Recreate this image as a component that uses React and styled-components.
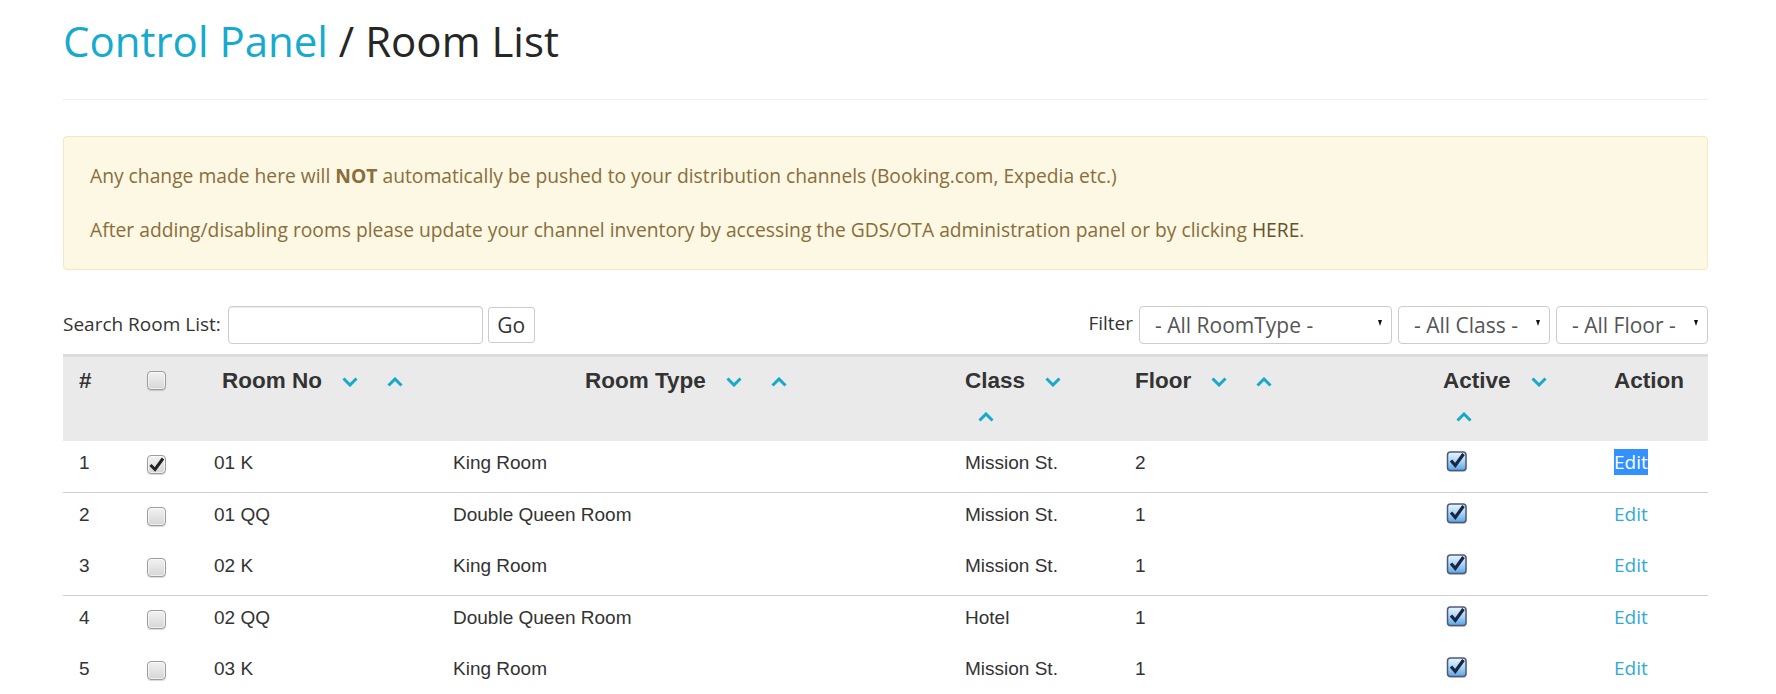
import React from 'react';
import styled, { createGlobalStyle } from 'styled-components';

const GlobalStyle = createGlobalStyle`
  html, body { margin: 0; padding: 0; background: #fff; }
  body { font-family: "Open Sans", "Liberation Sans", Arial, sans-serif; color: #333; }
  *, *::before, *::after { box-sizing: border-box; }
`;

const Page = styled.div`
  height: 694px;
  overflow: hidden;
  padding: 0 68px 0 63px;
`;

const TitleBar = styled.header`
  padding: 18px 0 35px;
  border-bottom: 1px solid #eee;
`;

const Title = styled.h1`
  margin: 0;
  font-family: "Open Sans", sans-serif;
  font-weight: 400;
  font-size: 42px;
  line-height: 46px;
  color: #262626;
`;

const Crumb = styled.span`
  color: #16aacf;
`;

const Alert = styled.div`
  margin-top: 36px;
  padding: 26px 26px 26px;
  background: #fcf8e3;
  border: 1px solid #f7e6c1;
  border-radius: 4px;
  color: #8a6d3b;
  font-family: "Open Sans", sans-serif;
  font-size: 19.25px;
  line-height: 26px;
  display: flex;
  flex-direction: column;
  gap: 28px;
`;

const AlertLine = styled.p`
  margin: 0;
`;

const Strong = styled.b`
  font-weight: 700;
`;

const AlertLink = styled.a`
  color: #66512c;
  text-decoration: none;
`;

const Toolbar = styled.div`
  margin-top: 36px;
  height: 38px;
  display: flex;
  align-items: center;
  justify-content: space-between;
`;

const Group = styled.div`
  display: flex;
  align-items: center;
  gap: ${p => p.$gap}px;
`;

const Label = styled.label`
  font-family: "Open Sans", sans-serif;
  font-size: 19px;
  color: #333;
  padding-bottom: ${p => p.$lift}px;
  margin-right: ${p => p.$mr}px;
`;

const SearchInput = styled.input`
  width: 255px;
  height: 38px;
  border: 1px solid #ccc;
  border-radius: 4px;
  box-shadow: inset 0 1px 1px rgba(0, 0, 0, 0.075);
  font-family: "Open Sans", sans-serif;
  font-size: 21px;
  padding: 0 12px;
  outline: none;
`;

const GoButton = styled.button`
  width: 47px;
  height: 36px;
  margin-left: 5px;
  border: 1px solid #ccc;
  border-radius: 3px;
  background: #fff;
  color: #333;
  font-family: "Open Sans", sans-serif;
  font-size: 21px;
  padding: 0;
`;

const SelectBox = styled.div`
  position: relative;
  width: ${p => p.$w}px;
  height: 38px;
  border: 1px solid #ccc;
  border-radius: 4px;
  background: #fff;
  display: flex;
  align-items: center;
  padding-left: 15px;
  font-family: "Open Sans", sans-serif;
  font-size: 21px;
  color: #555;
  white-space: nowrap;
`;

const Arrow = styled.span`
  position: absolute;
  right: 9px;
  top: 13px;
  width: 0;
  height: 0;
  border-left: 2.5px solid transparent;
  border-right: 2.5px solid transparent;
  border-top: 6px solid #111;
`;

const Table = styled.div`
  margin-top: 10px;
  font-family: "Liberation Sans", Arial, sans-serif;
  color: #333;
`;

const HeadRow = styled.div`
  display: grid;
  grid-template-columns: 77px 74px 363px 380px 170px 308px 171px 102px;
  background: #eaeaea;
  border-top: 3px solid #dcdcdc;
`;

const HeadCell = styled.div`
  padding: ${p => (p.$box ? '14px' : '6px')} 8px 6px ${p => p.$indent ?? 8}px;
  font-weight: 700;
  font-size: 22.5px;
  line-height: 36px;
  white-space: nowrap;
`;

const SortIcon = styled.span`
  display: ${p => (p.$block ? 'flex' : 'inline-flex')};
  height: ${p => (p.$block ? '36px' : 'auto')};
  align-items: center;
  vertical-align: middle;
  margin-left: ${p => p.$ml}px;
  line-height: 0;
`;

const BodyRow = styled.div`
  display: grid;
  grid-template-columns: 77px 66px 239px 512px 170px 311px 168px 102px;
  height: ${p => (p.$divider ? 52 : 51)}px;
  border-top: ${p => (p.$divider ? '1px solid #cfcfcf' : 'none')};
`;

const Cell = styled.div`
  padding: 8px 8px 0 ${p => p.$indent ?? 8}px;
  font-size: 19px;
  line-height: 27px;
  white-space: nowrap;
`;

const BoxCell = styled.div`
  padding: ${p => p.$top}px 0 0 ${p => p.$indent}px;
`;

const EditLink = styled.a`
  font-family: "Open Sans", sans-serif;
  font-size: 19px;
  text-decoration: none;
  color: ${p => (p.$selected ? '#fff' : '#2eabd4')};
  background: ${p => (p.$selected ? '#3390ff' : 'transparent')};
`;

const GrayBox = styled.span`
  display: block;
  width: 19px;
  height: 19px;
  border: 1px solid #9c9c9c;
  border-radius: 4px;
  background: linear-gradient(#f2f2f2, #d6d6d6);
  box-shadow: 0 1px 1px rgba(0, 0, 0, 0.15), inset 0 0 0 1px rgba(255, 255, 255, 0.6);
  line-height: 0;
`;

const Chevron = ({ up }) => (
  <svg width="16" height="10" viewBox="0 0 16 10">
    <path
      d={up ? 'M1.5 8.5 L8 2 L14.5 8.5' : 'M1.5 1.5 L8 8 L14.5 1.5'}
      fill="none"
      stroke="#17a8cd"
      strokeWidth="3"
    />
  </svg>
);

const Checkbox = ({ checked }) => (
  <GrayBox>
    {checked && (
      <svg width="17" height="17" viewBox="0 0 17 17">
        <path d="M2.5 9 L7 13.5 L15 2.5" fill="none" stroke="#222" strokeWidth="3" />
      </svg>
    )}
  </GrayBox>
);

const ActiveBox = ({ id }) => (
  <svg width="22" height="22" viewBox="0 0 22 22" style={{ display: 'block' }}>
    <defs>
      <linearGradient id={id} x1="0" y1="0" x2="0" y2="1">
        <stop offset="0" stopColor="#eaf6ff" />
        <stop offset="0.5" stopColor="#a9d6f8" />
        <stop offset="1" stopColor="#5aa4e4" />
      </linearGradient>
    </defs>
    <rect x="1.5" y="2" width="19" height="19" rx="3" fill="#000" opacity="0.18" />
    <rect x="1.5" y="1" width="18.5" height="18.5" rx="3" fill={`url(#${id})`} stroke="#4d5a78" strokeWidth="1.5" />
    <path d="M5 9.5 L9.3 14.5 L17.5 3" fill="none" stroke="#1b2440" strokeWidth="3.2" />
  </svg>
);

const SortPair = ({ wrap }) => (
  <>
    <SortIcon $ml={20}><Chevron /></SortIcon>
    <SortIcon $ml={wrap ? 13 : 29} $block={wrap}><Chevron up /></SortIcon>
  </>
);

const rows = [
  { n: 1, checked: true, no: '01 K', type: 'King Room', cls: 'Mission St.', floor: '2', selected: true },
  { n: 2, no: '01 QQ', type: 'Double Queen Room', cls: 'Mission St.', floor: '1', divider: true },
  { n: 3, no: '02 K', type: 'King Room', cls: 'Mission St.', floor: '1' },
  { n: 4, no: '02 QQ', type: 'Double Queen Room', cls: 'Hotel', floor: '1', divider: true },
  { n: 5, no: '03 K', type: 'King Room', cls: 'Mission St.', floor: '1' },
];

export default function App() {
  return (
    <Page>
      <GlobalStyle />
      <TitleBar>
        <Title>
          <Crumb>Control Panel</Crumb> / Room List
        </Title>
      </TitleBar>

      <Alert>
        <AlertLine>
          Any change made here will <Strong>NOT</Strong> automatically be pushed to your distribution channels (Booking.com, Expedia etc.)
        </AlertLine>
        <AlertLine>
          After adding/disabling rooms please update your channel inventory by accessing the GDS/OTA administration panel or by clicking <AlertLink href="#">HERE</AlertLink>.
        </AlertLine>
      </Alert>

      <Toolbar>
        <Group $gap={0}>
          <Label $mr={7} $lift={3}>Search Room List:</Label>
          <SearchInput type="text" />
          <GoButton>Go</GoButton>
        </Group>
        <Group $gap={6}>
          <Label $mr={0} $lift={5}>Filter</Label>
          <SelectBox $w={253}>- All RoomType -<Arrow /></SelectBox>
          <SelectBox $w={152}>- All Class -<Arrow /></SelectBox>
          <SelectBox $w={152}>- All Floor -<Arrow /></SelectBox>
        </Group>
      </Toolbar>

      <Table>
        <HeadRow>
          <HeadCell $indent={16}>#</HeadCell>
          <HeadCell $box $indent={7}><Checkbox /></HeadCell>
          <HeadCell>Room No<SortPair /></HeadCell>
          <HeadCell>Room Type<SortPair /></HeadCell>
          <HeadCell>Class<SortPair wrap /></HeadCell>
          <HeadCell>Floor<SortPair /></HeadCell>
          <HeadCell>Active<SortPair wrap /></HeadCell>
          <HeadCell>Action</HeadCell>
        </HeadRow>
        {rows.map(r => (
          <BodyRow key={r.n} $divider={r.divider}>
            <Cell $indent={16}>{r.n}</Cell>
            <BoxCell $top={14} $indent={7}><Checkbox checked={r.checked} /></BoxCell>
            <Cell>{r.no}</Cell>
            <Cell>{r.type}</Cell>
            <Cell>{r.cls}</Cell>
            <Cell>{r.floor}</Cell>
            <BoxCell $top={10} $indent={8}><ActiveBox id={`ab${r.n}`} /></BoxCell>
            <Cell><EditLink href="#" $selected={r.selected}>Edit</EditLink></Cell>
          </BodyRow>
        ))}
      </Table>
    </Page>
  );
}
